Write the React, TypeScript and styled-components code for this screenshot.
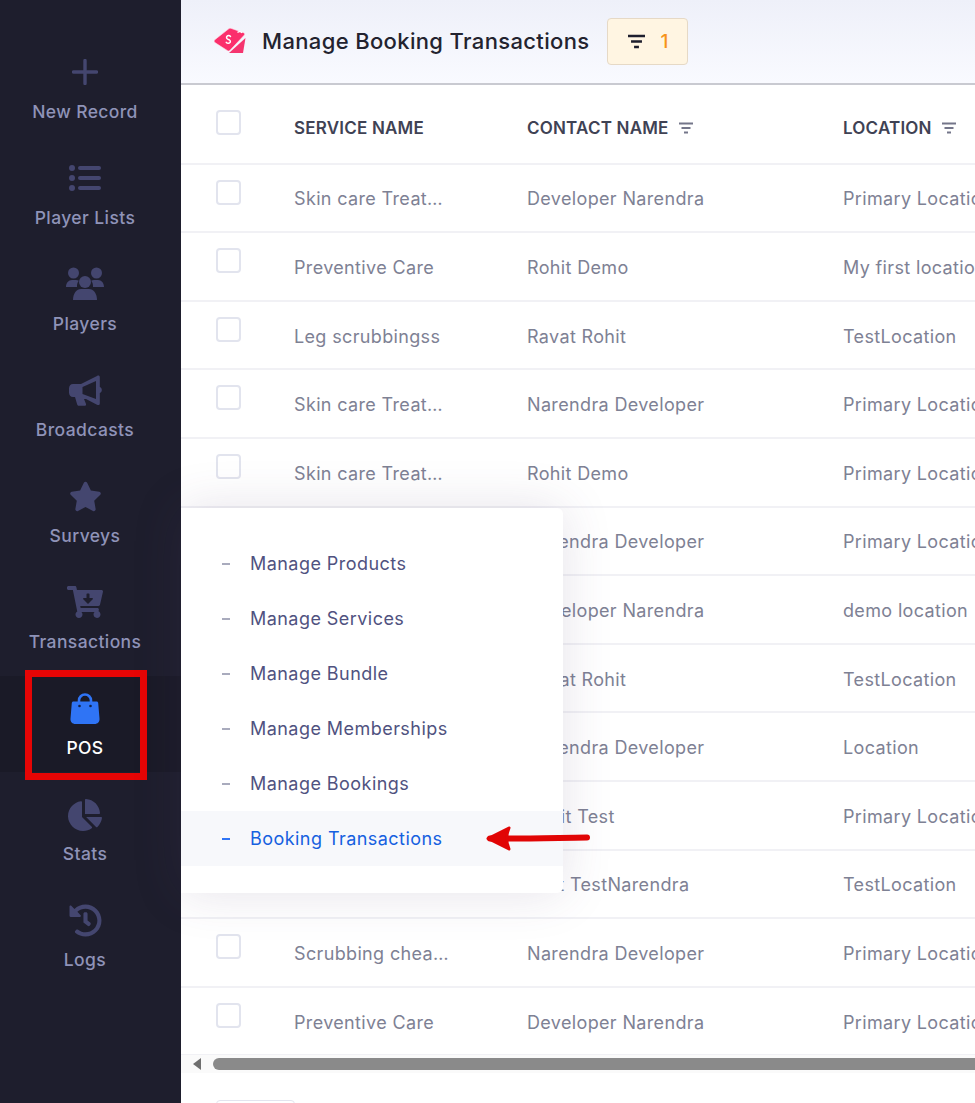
import React from "react";
import styled, { createGlobalStyle } from "styled-components";
import { FaCartArrowDown, FaChartPie, FaHistory, FaStar } from "react-icons/fa";

const GlobalStyle = createGlobalStyle`
  html, body {
    margin: 0;
    padding: 0;
    background: #fff;
  }
  body {
    font-family: "Inter", "Open Sans", sans-serif;
    overflow: hidden;
  }
`;

const Page = styled.div`
  display: flex;
  width: 975px;
  height: 1103px;
  overflow: hidden;
`;

const Sidebar = styled.nav`
  flex: 0 0 181px;
  display: flex;
  flex-direction: column;
  gap: 10.1px;
  padding-top: 39px;
  box-sizing: border-box;
  background: #1e1e2d;
`;

const NavItem = styled.div<{ $active?: boolean }>`
  position: relative;
  height: 96px;
  padding-right: 11px;
  display: flex;
  flex-direction: column;
  align-items: center;
  color: ${(p) => (p.$active ? "#ffffff" : "#8f93b8")};
  background: ${(p) => (p.$active ? "#1a1a27" : "transparent")};
`;

const NavIcon = styled.div<{ $active?: boolean }>`
  height: 36px;
  margin-top: 15px;
  display: flex;
  align-items: center;
  justify-content: center;
  color: ${(p) => (p.$active ? "#2f74f5" : "#44466f")};
`;

const NavLabel = styled.div`
  margin-top: 10.5px;
  font-size: 17.5px;
  line-height: 22px;
  font-weight: 500;
  letter-spacing: 0.4px;
  white-space: nowrap;
`;

const RedFrame = styled.div`
  position: absolute;
  left: 25px;
  top: -6px;
  width: 122px;
  height: 110px;
  box-sizing: border-box;
  border: 7px solid #e60505;
`;

const Main = styled.main`
  position: relative;
  flex: 1;
  min-width: 0;
  display: flex;
  flex-direction: column;
`;

const Header = styled.header`
  height: 85px;
  box-sizing: border-box;
  display: flex;
  align-items: center;
  padding-left: 33px;
  background: linear-gradient(#eef0f9, #f9faff);
  border-bottom: 2px solid #c9cad1;
`;

const TagGlyph = styled.span`
  display: flex;
  margin-bottom: 4px;
`;

const Title = styled.h1`
  margin: 0 18px 2px 16px;
  font-size: 22px;
  line-height: 30px;
  font-weight: 500;
  letter-spacing: 0.35px;
  color: #23232f;
  white-space: nowrap;
`;

const FilterBadge = styled.div`
  width: 81px;
  height: 47px;
  box-sizing: border-box;
  display: flex;
  align-items: center;
  justify-content: center;
  gap: 16px;
  background: #fff5e2;
  border: 1px solid #e6d9c6;
  border-radius: 4px;
  color: #f7931a;
  font-size: 19px;
  font-weight: 500;
`;

const BadgeGlyph = styled.span`
  display: flex;
  color: #1e1e2d;
`;

const Row = styled.div<{ $head?: boolean }>`
  height: ${(p) => (p.$head ? "79.6px" : "68.6px")};
  box-sizing: border-box;
  display: grid;
  grid-template-columns: 78px 233px 316px 200px;
  padding-left: 35px;
  border-bottom: 2px solid #f1f1f5;
`;

const Check = styled.span<{ $head?: boolean }>`
  display: block;
  width: 25px;
  height: 25px;
  margin-top: ${(p) => (p.$head ? "25px" : "15px")};
  box-sizing: border-box;
  border: 2px solid #e2e4ee;
  border-radius: 4px;
  background: #fff;
`;

const Cell = styled.div`
  display: flex;
  align-items: center;
  gap: 10px;
  padding-top: 2px;
  font-size: 18px;
  letter-spacing: 0.35px;
  color: #7e8194;
  white-space: nowrap;
`;

const HeadCell = styled(Cell)`
  padding-top: 8px;
  font-size: 17px;
  font-weight: 600;
  letter-spacing: 0.2px;
  color: #3f4254;
`;

const HeadGlyph = styled.span`
  display: flex;
  color: #74768a;
`;

const ScrollTrack = styled.div`
  height: 18px;
  margin-top: -1px;
  display: flex;
  align-items: center;
  gap: 12px;
  padding-left: 12px;
  background: #fafafa;
`;

const ScrollArrow = styled.span`
  width: 0;
  height: 0;
  border-style: solid;
  border-width: 6px 8px 6px 0;
  border-color: transparent #6f6f6f transparent transparent;
`;

const ScrollThumb = styled.div`
  flex: 1;
  height: 12px;
  border-radius: 6px 0 0 6px;
  background: #8a8a8a;
`;

const Footer = styled.div`
  flex: 1;
  padding: 27px 0 0 35px;
  overflow: hidden;
`;

const PageSelect = styled.div`
  width: 79px;
  height: 30px;
  box-sizing: border-box;
  border: 1px solid #e2e4ee;
  border-radius: 4px;
`;

const Dropdown = styled.div`
  position: absolute;
  left: 0;
  top: 508px;
  width: 382px;
  padding: 28px 0 27px;
  box-sizing: border-box;
  background: #fff;
  border-radius: 0 6px 6px 0;
  box-shadow: 0 0 50px rgba(82, 63, 105, 0.15);
`;

const MenuItem = styled.div<{ $active?: boolean }>`
  height: 55px;
  display: flex;
  align-items: center;
  gap: 20px;
  padding-left: 41px;
  font-size: 18px;
  letter-spacing: 0.45px;
  color: ${(p) => (p.$active ? "#1560e0" : "#50527f")};
  background: ${(p) => (p.$active ? "#f7f8fb" : "transparent")};
`;

const Dash = styled.span<{ $active?: boolean }>`
  width: 8px;
  height: 2px;
  background: ${(p) => (p.$active ? "#2f74f5" : "#a9abbd")};
`;

const Arrow = styled.svg`
  position: absolute;
  left: 301px;
  top: 822px;
`;

const PlusIcon = () => (
  <svg width="26" height="26" viewBox="0 0 26 26" fill="none" stroke="currentColor" strokeWidth="3.4" strokeLinecap="round">
    <path d="M13 1.5v23M1.5 13h23" />
  </svg>
);

const ListIcon = () => (
  <svg width="32" height="26" viewBox="0 0 32 26" fill="currentColor">
    <circle cx="3" cy="3" r="3" />
    <circle cx="3" cy="13" r="3" />
    <circle cx="3" cy="23" r="3" />
    <rect x="9" y="1" width="23" height="4" rx="2" />
    <rect x="9" y="11" width="23" height="4" rx="2" />
    <rect x="9" y="21" width="23" height="4" rx="2" />
  </svg>
);

const PeopleIcon = () => (
  <svg width="40" height="34" viewBox="0 0 40 34" fill="currentColor">
    <circle cx="8.500" cy="6" r="5.500" />
    <circle cx="31.500" cy="6" r="5.500" />
    <circle cx="20" cy="15" r="6" />
    <path d="M8 33c0-6.500 3.500-11 8-11h8c4.500 0 8 4.500 8 11z" />
    <path d="M1 20c0-4 2.500-7 6-7h4c1 0 2 .3 2.800.8-1.300 1.600-2 3.700-1.800 6.200z" />
    <path d="M39 20c0-4-2.500-7-6-7h-4c-1 0-2 .3-2.800.8 1.300 1.600 2 3.700 1.800 6.200z" />
  </svg>
);

const MegaphoneIcon = () => (
  <svg width="33" height="31" viewBox="0 0 33 31" fill="currentColor" fillRule="evenodd">
    <path d="M4 9h8L28 1c1.500-.8 2.800-.3 2.800 1.200V12c1.500.6 2 1.600 2 3s-.5 2.400-2 3v10.500c0 1.500-1.300 2-2.800 1.300L17 24h-2l2 5c.3 1-.3 1.800-1.300 1.800H10c-1 0-1.500-.5-1.800-1.300L6 22H4c-2.500 0-4-2-4-4.500v-4C0 11 1.500 9 4 9z M13.500 12L27 6v18l-13.500-5z" />
  </svg>
);

const BagIcon = () => (
  <svg width="30" height="33" viewBox="0 0 30 33">
    <path d="M9 12V8.500a6 6 0 0 1 12 0V12" fill="none" stroke="currentColor" strokeWidth="2.600" />
    <path d="M3.500 9.500h23c1 0 1.600.6 1.700 1.600l1.300 15.400c.3 3.400-1.800 5.500-5 5.500H5.500c-3.200 0-5.300-2.100-5-5.500l1.300-15.400c.1-1 .7-1.600 1.700-1.600z" fill="currentColor" />
    <circle cx="9.500" cy="14" r="1.300" fill="#12224a" />
    <circle cx="20.500" cy="14" r="1.300" fill="#12224a" />
  </svg>
);

const TagIcon = () => (
  <svg width="32" height="28" viewBox="0 0 32 28">
    <path d="M31.500 12L29 27H15z" fill="#f5356f" />
    <path d="M.8 13.700L15 2.600c.6-.5 1.200-.6 1.900-.3l12.600 4.400c1 .3 1.500 1.400.9 2.300L16 24.300c-.6.800-1.600 1-2.400.4L.9 16.600c-1-.7-1-2.200-.1-2.900z" fill="#fb2f6c" stroke="#ffe3ea" strokeWidth="0.6" />
    <path d="M23.500 6.500c1.500-1.500 3.500-1 4.500.5" fill="none" stroke="#fff" strokeWidth="1.300" />
    <path d="M16.500 10.500c-1-1.200-2.700-1.100-3.500-.2-.8 1-.5 2.200.7 2.800l1.500.7c1.200.6 1.500 1.900.7 2.800-.8 1-2.500 1-3.600-.2" fill="none" stroke="#fff" strokeWidth="1.500" strokeLinecap="round" />
  </svg>
);

const FilterIcon = ({ size = 14, width = 2 }: { size?: number; width?: number }) => (
  <svg width={size} height={size} viewBox="0 0 14 14" fill="none" stroke="currentColor" strokeWidth={width}>
    <path d="M0 2.500h14M2.500 7h9M5 11.500h4" />
  </svg>
);

const navItems = [
  { label: "New Record", icon: <PlusIcon /> },
  { label: "Player Lists", icon: <ListIcon /> },
  { label: "Players", icon: <PeopleIcon /> },
  { label: "Broadcasts", icon: <MegaphoneIcon /> },
  { label: "Surveys", icon: <FaStar size={33} /> },
  { label: "Transactions", icon: <FaCartArrowDown size={36} /> },
  { label: "POS", icon: <BagIcon />, active: true },
  { label: "Stats", icon: <FaChartPie size={34} /> },
  { label: "Logs", icon: <FaHistory size={33} /> },
];

// service names of rows 6-11 sit behind the open menu
const rows = [
  ["Skin care Treat…", "Developer Narendra", "Primary Location"],
  ["Preventive Care", "Rohit Demo", "My first location"],
  ["Leg scrubbingss", "Ravat Rohit", "TestLocation"],
  ["Skin care Treat…", "Narendra Developer", "Primary Location"],
  ["Skin care Treat…", "Rohit Demo", "Primary Location"],
  ["", "Narendra Developer", "Primary Location"],
  ["", "Developer Narendra", "demo location"],
  ["", "Ravat Rohit", "TestLocation"],
  ["", "Narendra Developer", "Location"],
  ["", "Rohit Test", "Primary Location"],
  ["", "Test TestNarendra", "TestLocation"],
  ["Scrubbing chea…", "Narendra Developer", "Primary Location"],
  ["Preventive Care", "Developer Narendra", "Primary Location"],
];

const menuItems = [
  "Manage Products",
  "Manage Services",
  "Manage Bundle",
  "Manage Memberships",
  "Manage Bookings",
  "Booking Transactions",
];

export default function App() {
  return (
    <Page>
      <GlobalStyle />
      <Sidebar>
        {navItems.map((item) => (
          <NavItem key={item.label} $active={item.active}>
            <NavIcon $active={item.active}>{item.icon}</NavIcon>
            <NavLabel>{item.label}</NavLabel>
            {item.active && <RedFrame />}
          </NavItem>
        ))}
      </Sidebar>
      <Main>
        <Header>
          <TagGlyph>
            <TagIcon />
          </TagGlyph>
          <Title>Manage Booking Transactions</Title>
          <FilterBadge>
            <BadgeGlyph>
              <FilterIcon size={17} />
            </BadgeGlyph>
            1
          </FilterBadge>
        </Header>
        <Row $head>
          <div>
            <Check $head />
          </div>
          <HeadCell>SERVICE NAME</HeadCell>
          <HeadCell>
            CONTACT NAME
            <HeadGlyph>
              <FilterIcon />
            </HeadGlyph>
          </HeadCell>
          <HeadCell>
            LOCATION
            <HeadGlyph>
              <FilterIcon />
            </HeadGlyph>
          </HeadCell>
        </Row>
        {rows.map((row, i) => (
          <Row key={i}>
            <div>
              <Check />
            </div>
            {row.map((text, j) => (
              <Cell key={j}>{text}</Cell>
            ))}
          </Row>
        ))}
        <ScrollTrack>
          <ScrollArrow />
          <ScrollThumb />
        </ScrollTrack>
        <Footer>
          <PageSelect />
        </Footer>
        <Dropdown>
          {menuItems.map((label, i) => {
            const active = i === menuItems.length - 1;
            return (
              <MenuItem key={label} $active={active}>
                <Dash $active={active} />
                {label}
              </MenuItem>
            );
          })}
        </Dropdown>
        <Arrow width="110" height="32" viewBox="0 0 110 32" fill="none" stroke="#e10505" strokeLinecap="round" strokeLinejoin="round">
          <path d="M8 16.500C35 17 70 16 105 15.500" strokeWidth="6" />
          <path d="M27 6L6 16.500 27 27C24 20 24 13 27 6z" fill="#e10505" strokeWidth="3" />
        </Arrow>
      </Main>
    </Page>
  );
}
